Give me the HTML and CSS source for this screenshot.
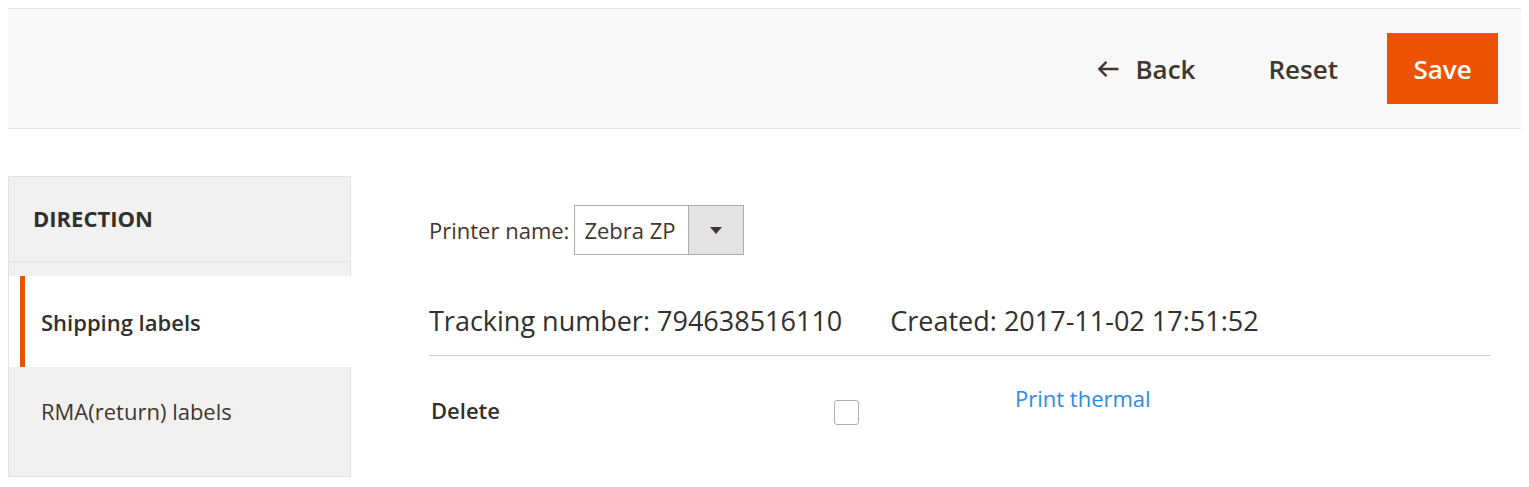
FILE: index.html
```html
<!DOCTYPE html>
<html lang="en">
<head>
<meta charset="utf-8">
<title>Shipping labels</title>
<link rel="stylesheet" href="styles.css">
</head>
<body>
<header class="page-actions">
  <button class="btn btn-back" type="button">
    <svg class="back-icon" width="22" height="18" viewBox="0 0 22 18" aria-hidden="true"><path d="M9.5 1.8 L2.3 9 L9.5 16.2 M2.3 9 H21.5" fill="none" stroke="#41362f" stroke-width="2.4" stroke-linejoin="miter"/></svg>
    <span>Back</span>
  </button>
  <button class="btn btn-reset" type="button">Reset</button>
  <button class="btn btn-save" type="button">Save</button>
</header>

<div class="layout">
  <nav class="side-nav">
    <div class="side-title">DIRECTION</div>
    <div class="side-items">
      <div class="side-item active"><span class="side-link">Shipping labels</span></div>
      <div class="side-item"><span class="side-link">RMA(return) labels</span></div>
    </div>
  </nav>

  <main class="content">
    <div class="printer-row">
      <label class="printer-label">Printer name:</label>
      <div class="select">
        <span class="select-value">Zebra ZP</span>
        <span class="select-toggle"><span class="caret"></span></span>
      </div>
    </div>

    <div class="label-head">
      <span>Tracking number: 794638516110</span>
      <span>Created: 2017-11-02 17:51:52</span>
    </div>

    <div class="label-row">
      <span class="delete-label">Delete</span>
      <span class="checkbox"></span>
      <a class="print-link" href="#">Print thermal</a>
    </div>
  </main>
</div>
</body>
</html>
```

FILE: styles.css
```css
* { box-sizing: border-box; }

body {
  margin: 8px;
  font-family: "Open Sans", "Noto Sans", sans-serif;
  color: #303030;
  background: #ffffff;
}

.page-actions {
  height: 121px;
  background: #f8f8f8;
  border-top: 1px solid #e3e3e3;
  border-bottom: 1px solid #e3e3e3;
  display: flex;
  align-items: center;
  justify-content: flex-end;
  padding-right: 23px;
}

.btn {
  font-family: inherit;
  font-size: 26px;
  font-weight: 600;
  border: 0;
  background: none;
  color: #41362f;
  padding: 0;
  cursor: pointer;
  display: flex;
  align-items: center;
}

.back-icon { margin-right: 16px; }

.btn-reset { margin-left: 73px; }

.btn-save {
  margin-left: 49px;
  width: 111px;
  height: 71px;
  background: #eb5202;
  color: #ffffff;
  justify-content: center;
}

.layout {
  display: flex;
  margin-top: 47px;
}

.side-nav {
  width: 343px;
  height: 301px;
  background: #f1f1f1;
  border: 1px solid #e3e3e3;
  flex-shrink: 0;
}

.side-title {
  font-size: 22px;
  font-weight: 700;
  line-height: 30px;
  padding: 26px 0 28px 24px;
  border-bottom: 1px solid #e3e3e3;
}

.side-items { padding-top: 14px; }

.side-item {
  font-size: 22px;
  line-height: 30px;
  color: #41362f;
  padding: 29px 0 51px 32px;
}

.side-item.active {
  background: #ffffff;
  padding: 0 0 0 11px;
  margin-right: -1px;
}

.side-item.active .side-link {
  display: flex;
  align-items: center;
  height: 91px;
  border-left: 5px solid #eb5202;
  padding-left: 16px;
  font-weight: 600;
  color: #303030;
}

.content {
  flex: 1;
  padding: 29px 31px 0 78px;
}

.printer-row {
  display: flex;
  align-items: center;
}

.printer-label {
  font-size: 22px;
  color: #41362f;
  margin-right: 5px;
}

.select {
  display: flex;
  width: 170px;
  height: 50px;
  border: 1px solid #adadad;
  background: #ffffff;
}

.select-value {
  flex: 1;
  font-size: 22px;
  color: #41362f;
  padding-left: 9px;
  display: flex;
  align-items: center;
}

.select-toggle {
  width: 55px;
  border-left: 1px solid #adadad;
  background: #e3e3e3;
  display: flex;
  align-items: center;
  justify-content: center;
}

.caret {
  width: 0;
  height: 0;
  border-left: 6px solid transparent;
  border-right: 6px solid transparent;
  border-top: 7px solid #41362f;
}

.label-head {
  display: flex;
  gap: 48px;
  font-size: 27px;
  line-height: 36px;
  margin-top: 48px;
  padding-bottom: 16px;
  border-bottom: 1px solid #cccccc;
}

.label-row {
  display: flex;
  align-items: flex-start;
}

.delete-label {
  width: 405px;
  padding-left: 2px;
  margin-top: 39px;
  font-size: 22px;
  line-height: 30px;
  font-weight: 600;
}

.checkbox {
  width: 25px;
  height: 25px;
  margin-top: 44px;
  border: 1px solid #adadad;
  border-radius: 3px;
  background: #ffffff;
  margin-right: 156px;
}

.print-link {
  margin-top: 27px;
  font-size: 22px;
  line-height: 30px;
  color: #2d8ceb;
  text-decoration: none;
}
```
